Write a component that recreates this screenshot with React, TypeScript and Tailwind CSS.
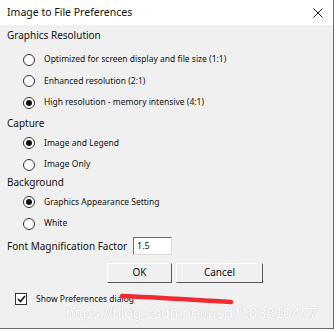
import React from 'react';

function Radio({ checked, label }: { checked?: boolean; label: string }) {
    return (
        <div className="flex items-center h-[21.5px] pl-[23px]">
            <span className="w-[12px] h-[12px] rounded-full border border-[#333] bg-white flex items-center justify-center">
                {checked && <span className="w-[6px] h-[6px] rounded-full bg-[#111]" />}
            </span>
            <span className="ml-[9px] text-[8.5px] text-[#111]">{label}</span>
        </div>
    );
}

function Header({ children, className = '' }: { children: React.ReactNode; className?: string }) {
    return <div className={`h-[19px] flex items-center pl-[7px] text-[10px] text-[#111] ${className}`}>{children}</div>;
}

export default function App() {
    return (
        <div className="w-[336px] h-[332px] bg-white relative overflow-hidden" style={{ fontFamily: '"Noto Sans", sans-serif' }}>
            <div className="w-[334px] h-[329px] border-r border-b border-[#6b6b6b] flex flex-col bg-[#f0f0f0]">
                {/* Title bar */}
                <div className="h-[25px] bg-white flex items-center justify-between pl-[7px] pr-[10px]">
                    <span className="text-[10.5px] text-[#111]">Image to File Preferences</span>
                    <svg width="10" height="10" viewBox="0 0 10 10">
                        <path d="M0.5 0.5 L9.5 9.5 M9.5 0.5 L0.5 9.5" stroke="#222" strokeWidth="1" />
                    </svg>
                </div>

                <div className="flex flex-col pt-[1px]">
                    <Header>Graphics Resolution</Header>
                    <div className="pt-[4px]">
                        <Radio label="Optimized for screen display and file size (1:1)" />
                        <Radio label="Enhanced resolution (2:1)" />
                        <Radio checked label="High resolution - memory intensive (4:1)" />
                    </div>
                    <Header>Capture</Header>
                    <Radio checked label="Image and Legend" />
                    <Radio label="Image Only" />
                    <Header className="-mt-[3px]">Background</Header>
                    <Radio checked label="Graphics Appearance Setting" />
                    <Radio label="White" />

                    <div className="flex items-center pl-[7px] mt-[2px] h-[19px]">
                        <span className="text-[10px] text-[#111]">Font Magnification Factor</span>
                        <div className="ml-[6px] w-[39px] h-[18px] bg-white border border-t-[#6d6d6d] border-l-[#6d6d6d] border-r-[#dcdcdc] border-b-[#dcdcdc] flex items-center pl-[3px] text-[9px] text-[#111]">
                            1.5
                        </div>
                    </div>

                    <div className="flex gap-[4px] pl-[107px] mt-[7px]">
                        <button className="w-[65px] h-[20px] bg-[#f0f0f0] border border-t-[#fff] border-l-[#fff] border-r-[#5a5a5a] border-b-[#5a5a5a] text-[10px] text-[#111]">
                            OK
                        </button>
                        <button className="w-[87px] h-[20px] bg-[#f0f0f0] border border-t-[#fff] border-l-[#fff] border-r-[#5a5a5a] border-b-[#5a5a5a] text-[10px] text-[#111]">
                            Cancel
                        </button>
                    </div>

                    <div className="flex items-center pl-[15px] mt-[10px] relative">
                        <span className="w-[12px] h-[12px] border border-[#333] bg-white flex items-center justify-center">
                            <svg width="9" height="8" viewBox="0 0 9 8">
                                <path d="M1 4 L3.5 6.5 L8 1" stroke="#111" strokeWidth="1.6" fill="none" />
                            </svg>
                        </span>
                        <span className="ml-[9px] text-[8.5px] text-[#111]">Show Preferences dialog</span>
                        {/* red scribble */}
                        <svg className="absolute left-[119px] top-[-2px]" width="116" height="16" viewBox="0 0 116 16">
                            <path d="M3 5 C 30 6, 60 8, 112 11" stroke="#ee2a33" strokeWidth="4.5" strokeLinecap="round" fill="none" />
                        </svg>
                    </div>
                </div>
            </div>

            {/* watermark */}
            <div
                className="absolute left-[66px] top-[304px] text-[15.4px] leading-[18px] text-white"
                style={{ fontFamily: '"Liberation Sans", Arial, sans-serif', textShadow: '0 0 1px #b0b0b0' }}
            >
                https://blog.csdn.net/asd1103810477
            </div>
        </div>
    );
}
